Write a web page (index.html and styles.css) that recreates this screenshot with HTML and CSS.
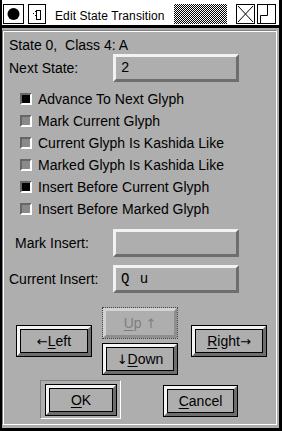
FILE: index.html
```html
<!DOCTYPE html>
<html lang="en">

<head>
    <meta charset="UTF-8">
    <meta name="viewport" content="width=device-width, initial-scale=1.0">
    <title>Edit State Transition</title>

    <link rel="stylesheet" href="styles.css">
</head>

<body>

    <div class="window">

        <div class="titlebar">
            <span class="tb-box tb-menu">
                <svg width="19" height="18" viewBox="0 0 19 18">
                    <circle cx="9.5" cy="9" r="6" fill="#000" />
                </svg>
            </span>
            <span class="tb-box tb-iconify">
                <svg width="16" height="18" viewBox="0 0 16 18">
                    <rect x="6" y="6" width="1" height="1" fill="#000" />
                    <rect x="4" y="8" width="1" height="1" fill="#000" />
                    <rect x="6" y="10" width="1" height="1" fill="#000" />
                    <rect x="7.5" y="5.5" width="4" height="9" fill="none" stroke="#000" />
                </svg>
            </span>
            <span class="tb-title">Edit State Transition</span>
            <span class="tb-stipple"></span>
            <span class="tb-box tb-close">
                <svg width="17" height="18" viewBox="0 0 17 18">
                    <path d="M1 1 L16 17 M16 1 L1 17" stroke="#000" fill="none" />
                </svg>
            </span>
            <span class="tb-box tb-max">
                <svg width="17" height="18" viewBox="0 0 17 18">
                    <path d="M9.5 0 V10.5 H2.5 V18" stroke="#000" fill="none" />
                </svg>
            </span>
        </div>

        <div class="body">
            <div class="panel">

                <div class="state">State 0,&nbsp; Class 4: A</div>

                <div class="field-row next">
                    <span class="field-label">Next State:</span>
                    <span class="field">2</span>
                </div>

                <!-- flags -->
                <div class="checks">
                    <div class="check-row"><span class="check on"></span>Advance To Next Glyph</div>
                    <div class="check-row"><span class="check"></span>Mark Current Glyph</div>
                    <div class="check-row"><span class="check"></span>Current Glyph Is Kashida Like</div>
                    <div class="check-row"><span class="check"></span>Marked Glyph Is Kashida Like</div>
                    <div class="check-row"><span class="check on"></span>Insert Before Current Glyph</div>
                    <div class="check-row"><span class="check"></span>Insert Before Marked Glyph</div>
                </div>

                <div class="field-row mark">
                    <span class="field-label">Mark Insert:</span>
                    <span class="field"></span>
                </div>

                <div class="field-row current">
                    <span class="field-label">Current Insert:</span>
                    <span class="field">Q u</span>
                </div>

                <div class="arrows">
                    <button class="btn"><span class="btn-face"><span class="arrow">&larr;</span><u>L</u>eft</span></button>
                    <div class="updown">
                        <button class="btn disabled"><span class="btn-face"><u>U</u>p <span class="arrow">&uarr;</span></span></button>
                        <button class="btn"><span class="btn-face"><span class="arrow">&darr;</span><u>D</u>own</span></button>
                    </div>
                    <button class="btn right"><span class="btn-face"><u>R</u>ight<span class="arrow">&rarr;</span></span></button>
                </div>

                <div class="actions">
                    <div class="default-frame">
                        <button class="btn ok"><span class="btn-face"><u>O</u>K</span></button>
                    </div>
                    <button class="btn cancel"><span class="btn-face"><u>C</u>ancel</span></button>
                </div>

            </div>
        </div>

    </div>

</body>

</html>
```

FILE: styles.css
```css
html,
body {
    margin: 0;
    padding: 0;
    background-color: #000;
}

body {
    font-family: 'Liberation Sans', Arial, sans-serif;
    font-size: 14px;
    color: #000;
}

.window {
    width: 282px;
    height: 431px;
    box-sizing: border-box;
    border-left: 2px solid #000;
    border-right: 3px solid #000;
    border-bottom: 3px solid #000;
    display: flex;
    flex-direction: column;
}

/* title bar */

.titlebar {
    height: 28px;
    box-sizing: border-box;
    background-color: #fff;
    border-bottom: 3px solid #000;
    padding-top: 4px;
    display: flex;
    align-items: flex-start;
}

.tb-box {
    display: flex;
    height: 20px;
    box-sizing: border-box;
    border: 1px solid #000;
    background-color: #fff;
}

.tb-menu {
    width: 21px;
    margin-left: 1px;
}

.tb-iconify {
    width: 18px;
    margin-left: 4px;
}

.tb-title {
    margin-left: 9px;
    margin-top: 5px;
    font-size: 12px;
    line-height: 14px;
    letter-spacing: 0.1px;
    white-space: nowrap;
}

.tb-stipple {
    margin-left: auto;
    margin-right: 9px;
    width: 53px;
    height: 20px;
    background: repeating-conic-gradient(#000 0 25%, #fff 0 50%) 0 0 / 2px 2px;
}

.tb-close {
    width: 19px;
}

.tb-max {
    width: 19px;
    margin-left: 2px;
    margin-right: 3px;
}

/* dialog body */

.body {
    flex: 1;
    display: flex;
    background-color: #aeaeae;
}

.panel {
    flex: 1;
    margin: 3px 2px 3px 1px;
    border: 1px solid #fff;
    box-shadow: -1px -1px 0 #808080;
}

.state {
    margin-top: 5px;
    padding-left: 5px;
    line-height: 16px;
    white-space: nowrap;
}

.field-row {
    display: flex;
    align-items: center;
    height: 28px;
}

.field-row.next {
    margin-top: 1px;
}

.field-row.mark {
    margin-top: 9px;
}

.field-row.current {
    margin-top: 8px;
}

.field-label {
    width: 109px;
    box-sizing: border-box;
    padding-left: 5px;
    white-space: nowrap;
}

.mark .field-label {
    padding-left: 11px;
}

.field {
    width: 126px;
    height: 28px;
    box-sizing: border-box;
    border: 3px solid;
    border-color: #f2f2f2 #6e6e6e #6e6e6e #f2f2f2;
    padding-left: 5px;
    display: flex;
    align-items: center;
    font-family: 'Liberation Mono', 'Courier New', monospace;
    font-size: 14px;
    letter-spacing: 1px;
    white-space: pre;
}

/* checkboxes */

.checks {
    margin-top: 6px;
}

.check-row {
    height: 22px;
    display: flex;
    align-items: center;
    padding-left: 16px;
    white-space: nowrap;
}

.check {
    width: 12px;
    height: 12px;
    box-sizing: border-box;
    border: 2px solid;
    border-color: #666 #fff #fff #666;
    background-color: #8a8a8a;
    margin-right: 6px;
}

.check.on {
    background-color: #000;
}

/* buttons */

.btn {
    display: flex;
    width: 76px;
    height: 32px;
    box-sizing: border-box;
    padding: 0;
    border: 1px solid #000;
    background-color: #aeaeae;
    font-family: 'Liberation Sans', Arial, sans-serif;
    font-size: 14px;
    color: #000;
}

.btn-face {
    flex: 1;
    display: flex;
    align-items: center;
    justify-content: center;
    border: 3px solid;
    border-color: #f4f4f4 #6e6e6e #6e6e6e #f4f4f4;
    box-shadow: inset 0 0 0 1px #000;
    white-space: pre;
}

.arrow {
    font-family: 'DejaVu Sans', sans-serif;
    font-size: 13px;
}

.btn u {
    text-underline-offset: 2px;
}

.btn.disabled {
    border: 1px dotted #444;
    color: #7e7e7e;
}

.btn.disabled .btn-face {
    border-color: #d2d2d2 #8e8e8e #8e8e8e #d2d2d2;
    box-shadow: none;
}

.arrows {
    margin-top: 14px;
    padding-left: 12px;
    display: flex;
    align-items: center;
}

.updown {
    margin-left: 10px;
    display: flex;
    flex-direction: column;
    gap: 4px;
}

.btn.right {
    margin-left: 13px;
}

.actions {
    margin-top: 5px;
    padding-left: 36px;
    display: flex;
    align-items: flex-start;
}

.default-frame {
    border: 1px solid;
    border-color: #808080 #fff #fff #808080;
    padding: 3px 3px 2px 4px;
}

.btn.ok {
    width: 72px;
}

.btn.cancel {
    width: 75px;
    margin-left: 42px;
    margin-top: 5px;
}
```
